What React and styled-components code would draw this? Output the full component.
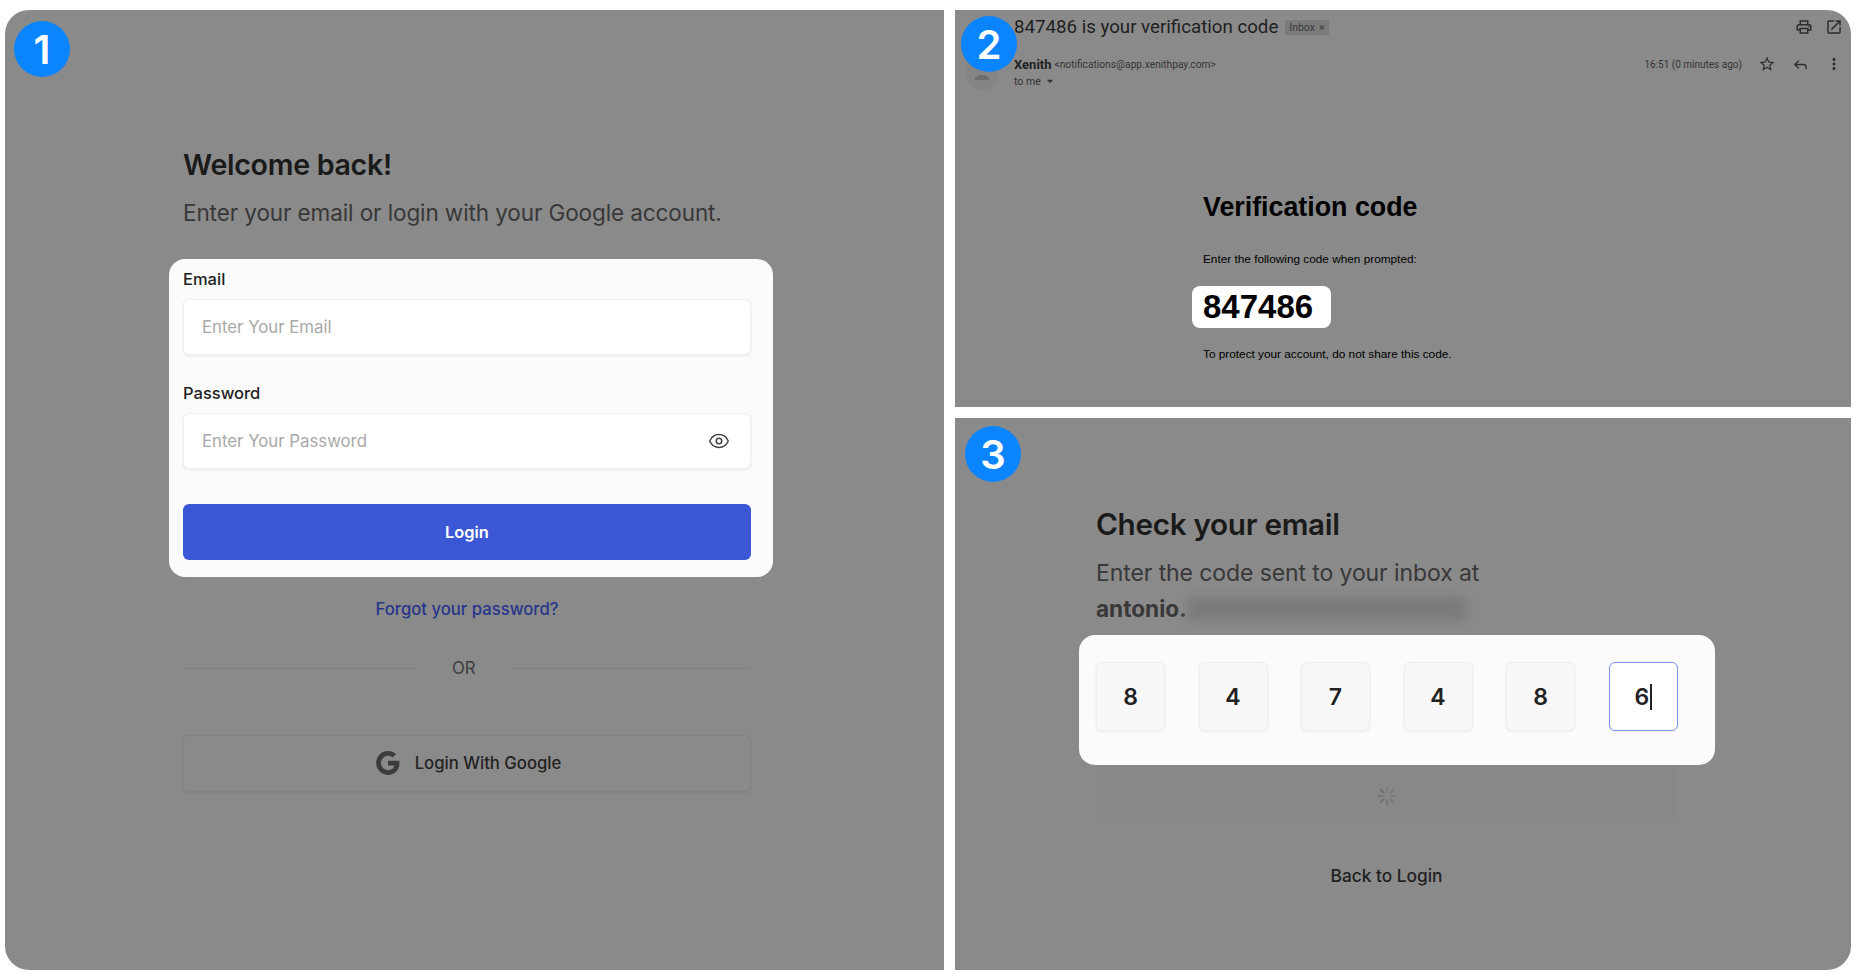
import React from "react";
import styled, { createGlobalStyle } from "styled-components";
import { Eye, Reply } from "lucide-react";
import { MdOutlinePrint, MdOpenInNew, MdStarBorder, MdMoreVert, MdArrowDropDown } from "react-icons/md";

const GlobalStyle = createGlobalStyle`
  html, body {
    margin: 0;
    background: #fff;
    overflow: hidden;
  }
  * { box-sizing: border-box; }
`;

const Page = styled.div`
  width: 1860px;
  height: 977px;
  padding: 10px 9px 6px 5px;
  display: grid;
  grid-template-columns: 939px 896px;
  grid-template-rows: 397px 552px;
  column-gap: 11px;
  row-gap: 11px;
  font-family: Inter, "Liberation Sans", sans-serif;
`;

const Panel = styled.section`
  position: relative;
  background: #8a8a8a;
  overflow: hidden;
  border-radius: ${(p) => p.$corners};
  grid-row: ${(p) => p.$rows || "auto"};
`;

const Badge = styled.div`
  position: absolute;
  left: ${(p) => p.$x}px;
  top: ${(p) => p.$y}px;
  width: 56px;
  height: 56px;
  border-radius: 50%;
  background: #0a84ff;
  color: #fff;
  font-size: 40px;
  font-weight: 600;
  display: flex;
  align-items: center;
  justify-content: center;
  z-index: 2;
`;

const LoginColumn = styled.div`
  width: 568px;
  margin-left: 178px;
  padding-top: 137px;
`;

const Heading = styled.h1`
  margin: 0;
  font-size: ${(p) => p.$size}px;
  line-height: 36px;
  font-weight: 600;
  color: #1a1a1a;
  letter-spacing: -0.3px;
`;

const Subtitle = styled.p`
  margin: ${(p) => p.$top}px 0 0;
  font-size: ${(p) => p.$size}px;
  line-height: 36px;
  color: #383838;
  white-space: nowrap;
  letter-spacing: -0.1px;
`;

const LoginCard = styled.div`
  width: 604px;
  height: 318px;
  margin: 28px 0 0 -14px;
  padding: 8px 22px 0 14px;
  background: #fbfbfb;
  border-radius: 16px;
`;

const Label = styled.label`
  display: block;
  font-size: 16.5px;
  line-height: 24px;
  font-weight: 500;
  color: #222;
  margin-bottom: 8px;
`;

const Field = styled.div`
  height: 56px;
  margin-bottom: ${(p) => p.$gap}px;
  padding: 0 18px;
  display: flex;
  align-items: center;
  background: #fff;
  border: 1px solid #f0f0f0;
  border-radius: 6px;
  box-shadow: 0 1px 3px rgba(0, 0, 0, 0.08);
`;

const Input = styled.input`
  flex: 1;
  min-width: 0;
  border: 0;
  outline: 0;
  padding: 0;
  background: transparent;
  font: inherit;
  font-size: 16.8px;
  &::placeholder {
    color: #a9a9a9;
    opacity: 1;
  }
`;

const EyeIcon = styled(Eye)`
  width: 22px;
  height: 22px;
  color: #444;
  stroke-width: 1.7;
  margin-right: 2px;
`;

const PrimaryButton = styled.button`
  display: block;
  width: 100%;
  height: 56px;
  border: 0;
  border-radius: 6px;
  background: #3b57d6;
  color: #fff;
  font: inherit;
  font-size: 16.4px;
  font-weight: 600;
`;

const ForgotLink = styled.a`
  display: block;
  margin-top: 20px;
  text-align: center;
  font-size: 16.7px;
  line-height: 24px;
  font-weight: 500;
  color: #28358c;
`;

const Divider = styled.div`
  margin-top: 35px;
  display: flex;
  align-items: center;
  font-size: 16.8px;
  line-height: 24px;
  color: #3d3d3d;
  &::before,
  &::after {
    content: "";
    height: 1px;
    background: #808080;
  }
  &::before {
    width: 235px;
    margin-right: 34px;
  }
  &::after {
    width: 239px;
    margin-left: 35px;
  }
`;

const GoogleButton = styled.div`
  height: 57px;
  margin-top: 55px;
  padding: 0 0 2px 2px;
  display: flex;
  align-items: center;
  justify-content: center;
  gap: 14px;
  border: 1px solid #828282;
  border-radius: 6px;
  box-shadow: 0 1px 3px rgba(0, 0, 0, 0.06);
  font-size: 16.7px;
  font-weight: 500;
  color: #222;
`;

const MailTopRow = styled.div`
  height: 30px;
  padding: 4px 8px 0 59px;
  display: flex;
  align-items: center;
  color: #1f1f1f;
`;

const Subject = styled.span`
  font-family: Roboto, sans-serif;
  font-size: 18.7px;
  line-height: 22px;
`;

const InboxChip = styled.span`
  margin-left: 7px;
  height: 15px;
  padding: 0 4px;
  display: flex;
  align-items: center;
  gap: 4px;
  background: #7a7a7a;
  border-radius: 2px;
  font-family: Roboto, sans-serif;
  font-size: 10.5px;
  color: #3a3a3a;
`;

const TopIcons = styled.div`
  margin-left: auto;
  display: flex;
  gap: 12px;
  font-size: 18px;
  color: #2d2d2d;
`;

const SenderRow = styled.div`
  display: flex;
  align-items: flex-start;
  padding: 16px 8px 0 10px;
  font-family: Roboto, sans-serif;
`;

const Avatar = styled.svg`
  width: 34px;
  height: 34px;
`;

const SenderInfo = styled.div`
  margin-left: 15px;
  flex: 1;
`;

const SenderLine = styled.div`
  display: flex;
  align-items: center;
  height: 16px;
`;

const SenderName = styled.strong`
  font-size: 13px;
  font-weight: 700;
  color: #1f1f1f;
`;

const SenderMail = styled.span`
  margin-left: 3px;
  font-size: 10.2px;
  color: #333;
`;

const ToMe = styled.div`
  margin-top: 1px;
  height: 16px;
  display: flex;
  align-items: center;
  font-size: 10.5px;
  color: #333;
  svg {
    font-size: 16px;
    margin-left: 1px;
  }
`;

const SentAt = styled.span`
  margin-left: auto;
  font-size: 10px;
  color: #333;
`;

const SenderIcons = styled.div`
  margin-left: 16px;
  display: flex;
  align-items: center;
  gap: 16px;
  font-size: 18px;
  color: #2d2d2d;
`;

const ReplyIcon = styled(Reply)`
  width: 17px;
  height: 17px;
  stroke-width: 1.8;
`;

const MailBody = styled.div`
  margin: 100px 0 0 248px;
  font-family: "Liberation Sans", Arial, sans-serif;
  color: #000;
`;

const MailTitle = styled.h2`
  margin: 0;
  font-size: 26.8px;
  line-height: 34px;
  font-weight: 700;
`;

const MailText = styled.p`
  margin: ${(p) => p.$top}px 0 0;
  font-size: 11.8px;
  line-height: 16px;
`;

const CodeChip = styled.div`
  width: 139px;
  height: 42px;
  margin: 19px 0 0 -11px;
  padding-left: 11px;
  display: flex;
  align-items: center;
  background: #fff;
  border-radius: 8px;
  font-size: 33px;
  font-weight: 700;
`;

const VerifyColumn = styled.div`
  width: 581px;
  margin-left: 141px;
  padding-top: 88px;
`;

const Email = styled.div`
  font-size: 22.6px;
  line-height: 36px;
  color: #383838;
  display: flex;
  align-items: center;
`;

const EmailName = styled.strong`
  font-weight: 700;
`;

const BlurredMail = styled.span`
  width: 278px;
  height: 24px;
  margin-left: 1px;
  background: #7b7b7b;
  filter: blur(5px);
`;

const OtpCard = styled.div`
  width: 636px;
  height: 130px;
  margin: 8px 0 0 -17px;
  padding: 27px 0 0 17px;
  background: #fbfbfb;
  border-radius: 16px;
  display: flex;
  align-items: flex-start;
  gap: 33.5px;
`;

const OtpBox = styled.div`
  width: 69px;
  height: 69px;
  display: flex;
  align-items: center;
  justify-content: center;
  background: ${(p) => (p.$active ? "#fff" : "#f8f8f8")};
  border: ${(p) => (p.$active ? "1.5px solid #7d92ee" : "1px solid #efefef")};
  border-radius: 6px;
  box-shadow: 0 1px 3px rgba(0, 0, 0, 0.06);
  font-size: 23px;
  font-weight: 600;
  color: #222;
`;

const Caret = styled.span`
  width: 1.5px;
  height: 26px;
  background: #222;
  margin-left: 1px;
`;

const VerifyButton = styled.div`
  height: 57px;
  display: flex;
  align-items: center;
  justify-content: center;
  background: #888;
  border-radius: 0 0 6px 6px;
  padding-top: 4px;
  margin-bottom: 1px;
`;

const BackLink = styled.a`
  display: block;
  margin-top: 42px;
  text-align: center;
  font-size: 17.3px;
  line-height: 24px;
  font-weight: 500;
  color: #1f1f1f;
`;

function GoogleMark() {
  return (
    <svg width="26" height="26" viewBox="0 0 24 24" fill="#3c3c3c">
      <path d="M22.56 12.25c0-.78-.07-1.53-.2-2.25H12v4.26h5.92c-.26 1.37-1.04 2.53-2.21 3.31v2.77h3.57c2.08-1.92 3.28-4.74 3.28-8.09z" />
      <path d="M12 23c2.97 0 5.46-.98 7.28-2.66l-3.57-2.77c-.98.66-2.23 1.06-3.71 1.06-2.86 0-5.29-1.93-6.16-4.53H2.18v2.84C3.99 20.53 7.7 23 12 23z" />
      <path d="M5.84 14.09c-.22-.66-.35-1.36-.35-2.09s.13-1.43.35-2.09V7.07H2.18C1.43 8.55 1 10.22 1 12s.43 3.45 1.18 4.93l3.66-2.84z" />
      <path d="M12 5.38c1.62 0 3.06.56 4.21 1.64l3.15-3.15C17.45 2.09 14.97 1 12 1 7.7 1 3.99 3.47 2.18 7.07l3.66 2.84c.87-2.6 3.3-4.53 6.16-4.53z" />
    </svg>
  );
}

function Spinner() {
  const angles = [0, 45, 90, 135, 180, 225, 270, 315];
  return (
    <svg width="22" height="22" viewBox="0 0 22 22" stroke="#6a6a6a" strokeWidth="1.6" strokeLinecap="round">
      {angles.map((a, i) => (
        <line key={a} x1="11" y1="2" x2="11" y2="6.5" opacity={0.45 + i * 0.07} transform={`rotate(${a} 11 11)`} />
      ))}
    </svg>
  );
}

const digits = ["8", "4", "7", "4", "8", "6"];

export default function App() {
  return (
    <>
      <GlobalStyle />
      <Page>
        <Panel $corners="24px 0 0 24px" $rows="1 / span 2">
          <Badge $x={9} $y={11}>1</Badge>
          <LoginColumn>
            <Heading $size={28.6}>Welcome back!</Heading>
            <Subtitle $size={22.5} $top={12}>Enter your email or login with your Google account.</Subtitle>
            <LoginCard>
              <Label>Email</Label>
              <Field $gap={26}>
                <Input placeholder="Enter Your Email" />
              </Field>
              <Label>Password</Label>
              <Field $gap={35}>
                <Input placeholder="Enter Your Password" />
                <EyeIcon />
              </Field>
              <PrimaryButton>Login</PrimaryButton>
            </LoginCard>
            <ForgotLink>Forgot your password?</ForgotLink>
            <Divider>OR</Divider>
            <GoogleButton>
              <GoogleMark />
              Login With Google
            </GoogleButton>
          </LoginColumn>
        </Panel>

        <Panel $corners="0 24px 0 0">
          <Badge $x={6} $y={6}>2</Badge>
          <MailTopRow>
            <Subject>847486 is your verification code</Subject>
            <InboxChip>Inbox <span>×</span></InboxChip>
            <TopIcons>
              <MdOutlinePrint />
              <MdOpenInNew />
            </TopIcons>
          </MailTopRow>
          <SenderRow>
            <Avatar viewBox="0 0 34 34">
              <circle cx="17" cy="17" r="17" fill="#858585" />
              <path d="M10 24c0-3.500 3-5 7-5s7 1.500 7 5z" fill="#6c6c6c" />
            </Avatar>
            <SenderInfo>
              <SenderLine>
                <SenderName>Xenith</SenderName>
                <SenderMail>&lt;notifications@app.xenithpay.com&gt;</SenderMail>
                <SentAt>16:51 (0 minutes ago)</SentAt>
                <SenderIcons>
                  <MdStarBorder />
                  <ReplyIcon />
                  <MdMoreVert />
                </SenderIcons>
              </SenderLine>
              <ToMe>to me <MdArrowDropDown /></ToMe>
            </SenderInfo>
          </SenderRow>
          <MailBody>
            <MailTitle>Verification code</MailTitle>
            <MailText $top={27}>Enter the following code when prompted:</MailText>
            <CodeChip>847486</CodeChip>
            <MailText $top={18}>To protect your account, do not share this code.</MailText>
          </MailBody>
        </Panel>

        <Panel $corners="0 0 24px 0">
          <Badge $x={10} $y={8}>3</Badge>
          <VerifyColumn>
            <Heading $size={29.7}>Check your email</Heading>
            <Subtitle $size={23} $top={13}>Enter the code sent to your inbox at</Subtitle>
            <Email>
              <EmailName>antonio.</EmailName>
              <BlurredMail />
            </Email>
            <OtpCard>
              {digits.map((d, i) => (
                <OtpBox key={i} $active={i === 5}>
                  {d}
                  {i === 5 && <Caret />}
                </OtpBox>
              ))}
            </OtpCard>
            <VerifyButton>
              <Spinner />
            </VerifyButton>
            <BackLink>Back to Login</BackLink>
          </VerifyColumn>
        </Panel>
      </Page>
    </>
  );
}
